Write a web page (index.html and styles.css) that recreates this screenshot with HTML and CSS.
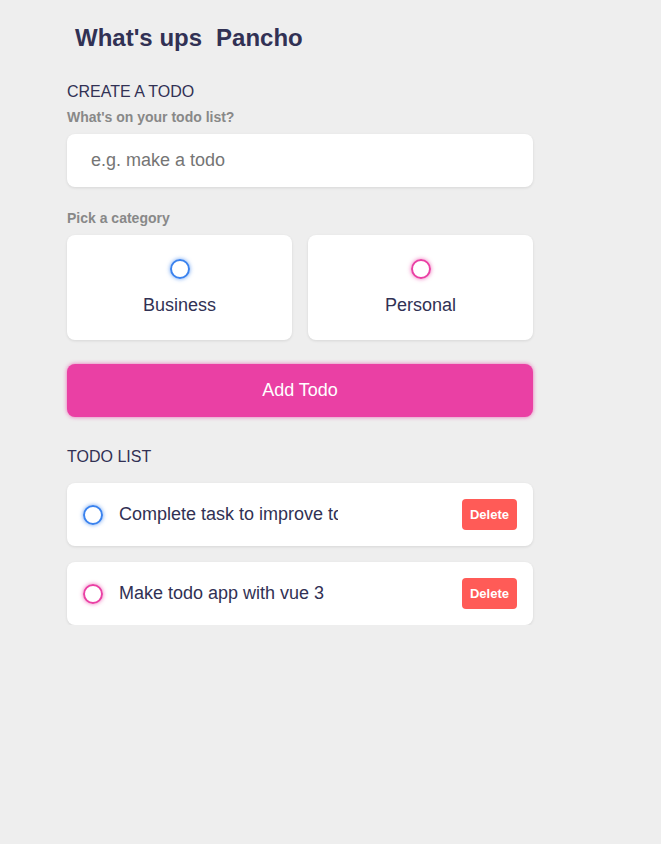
FILE: index.html
```html
<!DOCTYPE html>
<html lang="en">
<head>
<meta charset="utf-8">
<title>Todo</title>
<link rel="stylesheet" href="styles.css">
</head>
<body>
<main class="app">
  <section class="greeting">
    <h2 class="title">What's ups<span class="name">Pancho</span></h2>
  </section>

  <section class="create-todo">
    <h3>Create a todo</h3>
    <form class="form">
      <h4>What's on your todo list?</h4>
      <input class="field" type="text" placeholder="e.g. make a todo">

      <h4>Pick a category</h4>
      <div class="options">
        <label class="option">
          <span class="bubble business"></span>
          <span class="option-label">Business</span>
        </label>
        <label class="option">
          <span class="bubble personal"></span>
          <span class="option-label">Personal</span>
        </label>
      </div>

      <button class="submit" type="button">Add Todo</button>
    </form>
  </section>

  <section class="todo-list">
    <h3>Todo list</h3>
    <div class="list">
      <div class="todo-item">
        <span class="bubble business"></span>
        <div class="todo-content"><span class="todo-text">Complete task to improve todo app</span></div>
        <div class="actions"><button class="delete" type="button">Delete</button></div>
      </div>
      <div class="todo-item">
        <span class="bubble personal"></span>
        <div class="todo-content"><span class="todo-text">Make todo app with vue 3</span></div>
        <div class="actions"><button class="delete" type="button">Delete</button></div>
      </div>
    </div>
  </section>
</main>
</body>
</html>
```

FILE: styles.css
```css
* {
  box-sizing: border-box;
  margin: 0;
  padding: 0;
}

html, body {
  background: #eeeeee;
  color: #313154;
  font-family: "Liberation Sans", Arial, sans-serif;
}

.app {
  width: 466px;
  margin-left: 67px;
  padding-top: 24px;
}

.greeting {
  margin-bottom: 31px;
}

.title {
  display: flex;
  font-size: 24px;
  font-weight: 700;
  color: #313154;
  padding-left: 8px;
}

.name {
  margin-left: 14px;
}

h3 {
  font-size: 16px;
  font-weight: 400;
  text-transform: uppercase;
  color: #313154;
  margin-bottom: 8px;
}

h4 {
  font-size: 14px;
  font-weight: 700;
  color: #888888;
  margin-bottom: 9px;
}

.field {
  display: block;
  width: 100%;
  font-family: inherit;
  font-size: 18px;
  padding: 16px 24px;
  border: none;
  outline: none;
  color: #313154;
  background: #ffffff;
  border-radius: 8px;
  box-shadow: 0 1px 3px rgba(0, 0, 0, 0.1);
  margin-bottom: 23px;
}

.field::placeholder {
  color: #757575;
}

.options {
  display: grid;
  grid-template-columns: repeat(2, 1fr);
  gap: 16px;
  margin-bottom: 24px;
}

.option {
  display: flex;
  flex-direction: column;
  align-items: center;
  justify-content: center;
  background: #ffffff;
  padding: 24px;
  border-radius: 8px;
  box-shadow: 0 1px 3px rgba(0, 0, 0, 0.1);
}

.option-label {
  font-size: 18px;
  margin-top: 16px;
  color: #313154;
}

.bubble {
  display: block;
  flex: none;
  width: 20px;
  height: 20px;
  border-radius: 50%;
  border: 2px solid #3a82ee;
}

.bubble.business {
  border-color: #3a82ee;
  box-shadow: 0 0 4px rgba(58, 130, 238, 0.75);
}

.bubble.personal {
  border-color: #ea40a4;
  box-shadow: 0 0 4px rgba(234, 64, 164, 0.75);
}

.submit {
  display: block;
  width: 100%;
  font-family: inherit;
  font-size: 18px;
  padding: 16px 24px;
  border: none;
  color: #ffffff;
  background: #ea40a4;
  border-radius: 8px;
  box-shadow: 0 0 4px rgba(234, 64, 164, 0.75);
  line-height: normal;
}

.create-todo {
  margin-bottom: 31px;
}

.todo-list h3 {
  margin-bottom: 17px;
}

.list {
  display: flex;
  flex-direction: column;
  gap: 16px;
}

.todo-item {
  display: flex;
  align-items: center;
  background: #ffffff;
  padding: 16px;
  border-radius: 8px;
  box-shadow: 0 1px 3px rgba(0, 0, 0, 0.1);
}

.todo-item .bubble {
  margin-right: 16px;
}

.todo-content {
  flex: 1 1 0%;
}

.todo-text {
  display: block;
  width: 219px;
  overflow: hidden;
  white-space: nowrap;
  font-size: 18px;
  color: #313154;
}

.delete {
  display: block;
  font-family: inherit;
  font-size: 13px;
  font-weight: 700;
  padding: 8px;
  border: none;
  border-radius: 4px;
  color: #ffffff;
  background: #ff5b57;
  line-height: normal;
}
```
